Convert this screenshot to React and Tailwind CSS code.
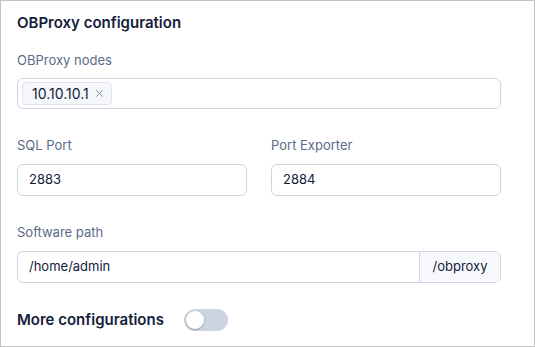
export default function App() {
  return (
    <div className="w-[535px] h-[347px] bg-white border border-[#c4c4c4] font-['Inter','Noto_Sans',sans-serif] text-[#132039] overflow-hidden">
      <div className="px-4 pt-[11px]">
        <h2 className="text-[15px] font-semibold leading-[22px]">OBProxy configuration</h2>

        <div className="mt-[16px]">
          <label className="block text-[13px] text-[#5c6b8a] leading-[20px]">OBProxy nodes</label>
          <div className="mt-[8px] w-[484px] h-[31px] border border-[#cdd5e4] rounded-[6px] flex items-center px-[4px]">
            <span className="h-[23px] flex items-center gap-[6px] pl-[9px] pr-[7px] bg-[#f5f7fb] border border-[#dfe4ee] rounded-[4px] text-[14px]">
              10.10.10.1
              <svg width="9" height="9" viewBox="0 0 10 10" className="text-[#8592ad]">
                <path d="M1.5 1.5 L8.5 8.5 M8.5 1.5 L1.5 8.5" stroke="currentColor" strokeWidth="1.1" />
              </svg>
            </span>
          </div>
        </div>

        <div className="mt-[26px] flex gap-[24px]">
          <div>
            <label className="block text-[13px] text-[#5c6b8a] leading-[20px]">SQL Port</label>
            <div className="mt-[9px] w-[230px] h-[32px] border border-[#cdd5e4] rounded-[6px] flex items-center px-[11px] text-[13px]">2883</div>
          </div>
          <div>
            <label className="block text-[13px] text-[#5c6b8a] leading-[20px]">Port Exporter</label>
            <div className="mt-[9px] w-[230px] h-[32px] border border-[#cdd5e4] rounded-[6px] flex items-center px-[11px] text-[13px]">2884</div>
          </div>
        </div>

        <div className="mt-[26px]">
          <label className="block text-[13px] text-[#5c6b8a] leading-[20px]">Software path</label>
          <div className="mt-[9px] w-[484px] h-[32px] border border-[#cdd5e4] rounded-[6px] flex text-[13px] overflow-hidden">
            <div className="flex-1 flex items-center px-[11px]">/home/admin</div>
            <div className="w-[81px] border-l border-[#cdd5e4] bg-[#f7f8fc] flex items-center justify-center">/obproxy</div>
          </div>
        </div>

        <div className="mt-[26px] flex items-center gap-[20px]">
          <span className="text-[15px] font-semibold leading-[22px]">More configurations</span>
          <span className="w-[44px] h-[22px] rounded-full bg-[#cdd3e0] flex items-center px-[2px]">
            <span className="w-[18px] h-[18px] rounded-full bg-white shadow-[0_1px_2px_rgba(0,0,0,0.25)]"></span>
          </span>
        </div>
      </div>
    </div>
  )
}
